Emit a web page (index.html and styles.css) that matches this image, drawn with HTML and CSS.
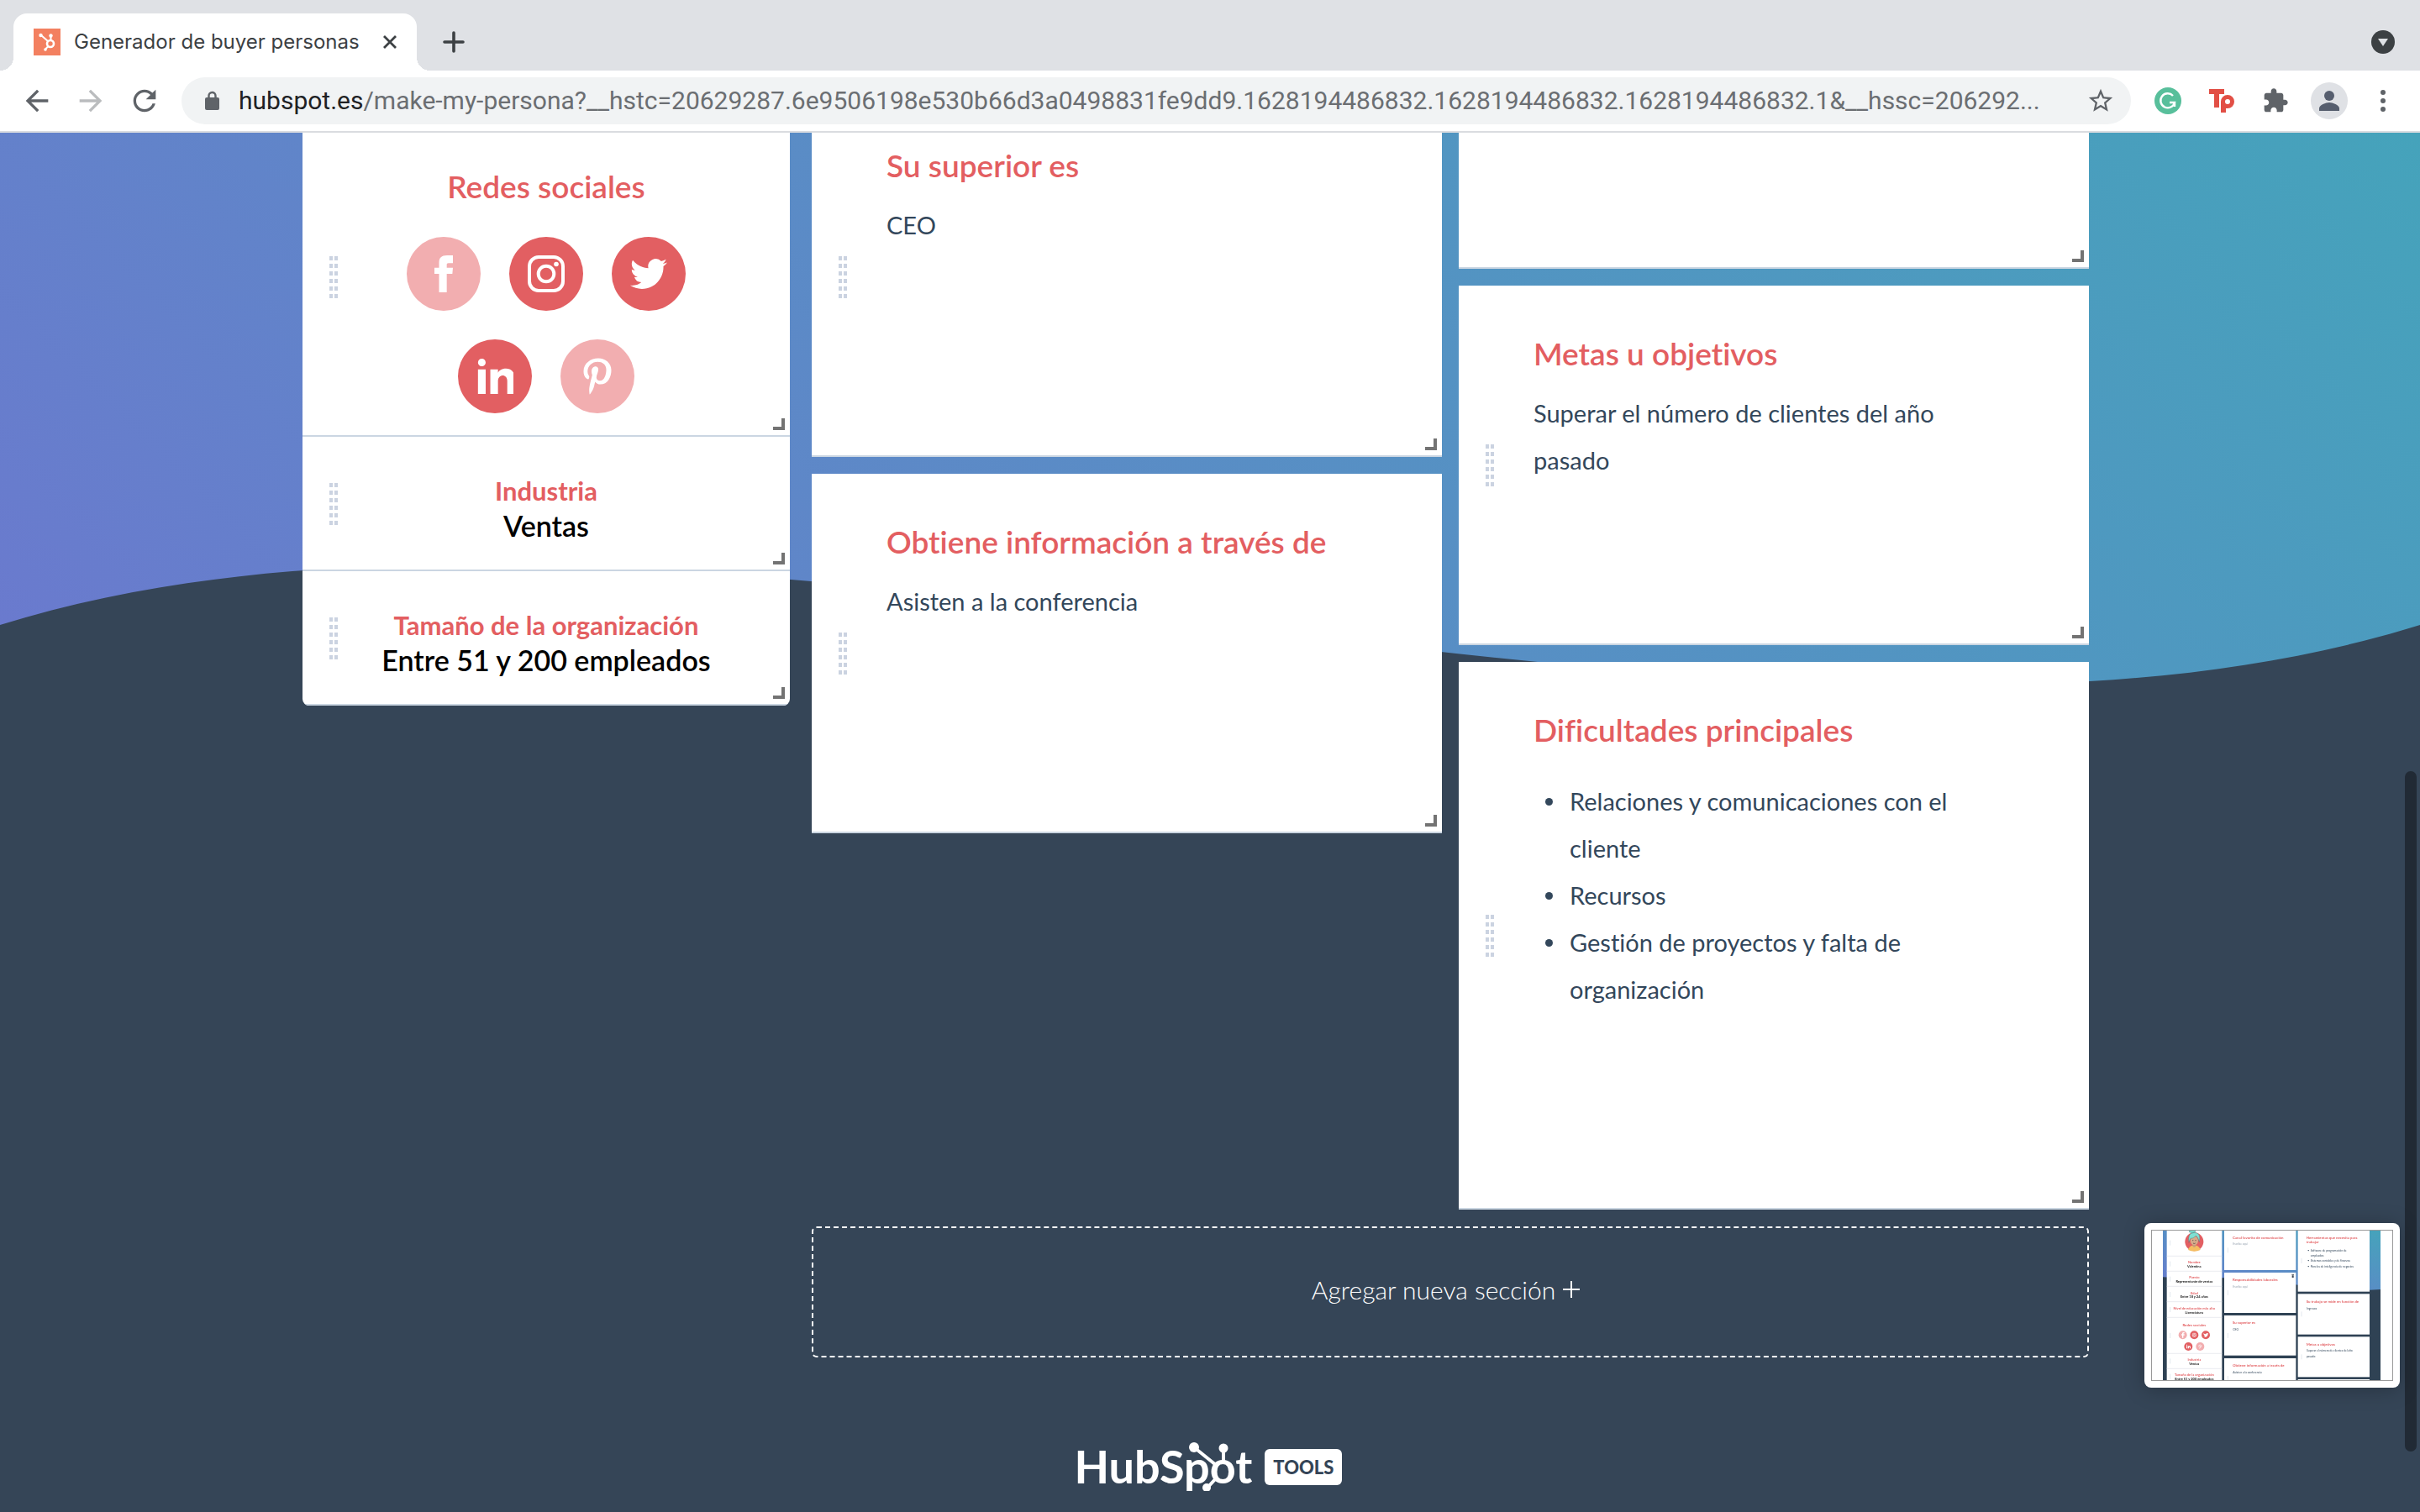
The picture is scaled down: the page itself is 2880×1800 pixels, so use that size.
FILE: index.html
```html
<!DOCTYPE html>
<html lang="es">
<head>
<meta charset="utf-8">
<meta name="viewport" content="width=device-width, initial-scale=1">
<title>Generador de buyer personas</title>
<link rel="stylesheet" href="styles.css">
</head>
<body>
<header class="browser">
  <div class="tabstrip">
    <div class="tab">
      <svg class="favicon" viewBox="0 0 32 32" aria-hidden="true"><rect width="32" height="32" fill="#f38060"/><g stroke="#fff" stroke-width="2" fill="none"><circle cx="20" cy="18" r="4" stroke-width="2.6"/><path d="M9 8l8 7M20.500 14V9M17.500 21l-4 4"/></g><g fill="#fff"><circle cx="8.500" cy="8" r="2.200"/><circle cx="20.500" cy="8.500" r="2.200"/><circle cx="14" cy="25" r="1.800"/></g></svg>
      <span class="tab-title">Generador de buyer personas</span>
      <button class="icon-btn tab-close" aria-label="Cerrar pestaña"><svg width="16" height="16" viewBox="0 0 16 16"><path d="M1 1l14 14M15 1L1 15" stroke="#3c4043" stroke-width="2.800"/></svg></button>
    </div>
    <button class="icon-btn new-tab" aria-label="Nueva pestaña"><svg width="26" height="26" viewBox="0 0 26 26"><path d="M13 2v22M2 13h22" stroke="#3c4043" stroke-width="3.600" stroke-linecap="round"/></svg></button>
    <button class="icon-btn tab-search" aria-label="Buscar pestañas"><svg width="28" height="28" viewBox="0 0 28 28"><circle cx="14" cy="14" r="14" fill="#3c4043"/><path d="M8 10h12l-6 9z" fill="#dfe1e5"/></svg></button>
  </div>
  <div class="toolbar">
    <button class="icon-btn" aria-label="Atrás"><svg width="40" height="40" viewBox="0 0 24 24"><path fill="#5f6368" d="M20 11H7.83l5.590-5.590L12 4l-8 8 8 8 1.410-1.410L7.830 13H20v-2z"/></svg></button>
    <button class="icon-btn" aria-label="Adelante"><svg width="40" height="40" viewBox="0 0 24 24"><path fill="#babcbe" d="M4 11h12.170l-5.590-5.590L12 4l8 8-8 8-1.410-1.410L16.170 13H4z"/></svg></button>
    <button class="icon-btn" aria-label="Recargar"><svg width="40" height="40" viewBox="0 0 24 24"><path fill="#5f6368" d="M17.650 6.350C16.200 4.900 14.210 4 12 4c-4.420 0-7.990 3.580-7.990 8s3.570 8 7.990 8c3.730 0 6.840-2.550 7.730-6h-2.080c-.82 2.330-3.040 4-5.650 4-3.310 0-6-2.690-6-6s2.690-6 6-6c1.660 0 3.140.69 4.220 1.780L13 11h7V4l-2.350 2.350z"/></svg></button>
    <div class="omnibox">
      <svg class="lock" width="32" height="28" viewBox="0 0 32 28" aria-hidden="true"><rect x="8" y="10" width="17" height="15" rx="2" fill="#5f6368"/><path d="M12.500 11V8a4 4 0 0 1 8 0v3" fill="none" stroke="#5f6368" stroke-width="2.400"/></svg>
      <div class="url" role="textbox" aria-label="Dirección"><span class="host">hubspot.es</span>/make-my-persona?__hstc=20629287.6e9506198e530b66d3a0498831fe9dd9.1628194486832.1628194486832.1628194486832.1&amp;__hssc=206292...</div>
      <button class="icon-btn star" aria-label="Añadir a favoritos"><svg width="34" height="34" viewBox="0 0 24 24"><path fill="#5f6368" d="M22 9.240l-7.190-.62L12 2 9.190 8.630 2 9.240l5.460 4.730L5.820 21 12 17.270 18.180 21l-1.630-7.030L22 9.240zM12 15.400l-3.760 2.270 1-4.280-3.320-2.880 4.380-.38L12 6.100l1.710 4.040 4.380.38-3.320 2.880 1 4.280L12 15.400z"/></svg></button>
    </div>
    <button class="icon-btn" aria-label="Grammarly"><svg width="32" height="32" viewBox="0 0 32 32"><circle cx="16" cy="16" r="16" fill="#58bf9b"/><path d="M22 10a8.500 8.500 0 1 0 2 8h-6M24 18v5" fill="none" stroke="#fff" stroke-width="2.400"/></svg></button>
    <button class="icon-btn" aria-label="Teleprompter"><svg width="32" height="32" viewBox="0 0 32 32" fill="#e24f45"><path d="M1 2h18v6h-6v16H7V8H1z"/><path fill-rule="evenodd" d="M15 30V17a8 8 0 1 1 8 8h-2v5zM23 14a3 3 0 1 0 0 6 3 3 0 0 0 0-6z"/></svg></button>
    <button class="icon-btn" aria-label="Extensiones"><svg width="32" height="32" viewBox="0 0 24 24"><path fill="#5f6368" d="M20.500 11H19V7c0-1.100-.9-2-2-2h-4V3.500C13 2.120 11.880 1 10.500 1S8 2.120 8 3.500V5H4c-1.100 0-1.990.9-1.990 2v3.800H3.500c1.490 0 2.700 1.210 2.700 2.700s-1.210 2.700-2.700 2.700H2V20c0 1.100.9 2 2 2h3.800v-1.500c0-1.490 1.210-2.700 2.700-2.700 1.490 0 2.700 1.210 2.700 2.700V22H17c1.100 0 2-.9 2-2v-4h1.500c1.380 0 2.500-1.120 2.500-2.500S21.880 11 20.500 11z"/></svg></button>
    <button class="icon-btn" aria-label="Perfil"><svg class="avatar" width="44" height="44" viewBox="0 0 44 44"><circle cx="22" cy="22" r="22" fill="#dfe1e5"/><g fill="#565e6e"><circle cx="22" cy="16" r="6"/><path d="M10 34v-3c0-4 8-7 12-7s12 3 12 7v3z"/></g></svg></button>
    <button class="icon-btn" aria-label="Menú"><svg width="8" height="28" viewBox="0 0 8 28" fill="#5f6368"><circle cx="4" cy="4" r="3"/><circle cx="4" cy="14" r="3"/><circle cx="4" cy="24" r="3"/></svg></button>
  </div>
</header>

<div class="page">
  <svg class="backdrop" viewBox="0 0 2880 700" preserveAspectRatio="none" aria-hidden="true">
    <defs><linearGradient id="sky" gradientUnits="userSpaceOnUse" x1="0" y1="586" x2="1733" y2="-1147"><stop offset="0" stop-color="#6a7ace"/><stop offset="1" stop-color="#45a3bb"/></linearGradient></defs>
    <path fill="url(#sky)" d="M0 0H2880V586C2080 836 800 336 0 586z"/>
  </svg>

  <main class="board">
    <aside class="profile">
      <section class="social">
        <span class="grip"></span>
        <h2 class="title">Redes sociales</h2>
        <div class="networks">
          <button class="network off" aria-label="Facebook"><svg width="44" height="44" viewBox="0 0 24 24"><path d="M9 8H6v4h3v12h5V12h3.642L18 8h-4V6.333C14 5.378 14.192 5 15.115 5H18V0h-3.808C10.596 0 9 1.583 9 4.615V8z"/></svg></button>
          <button class="network" aria-label="Instagram"><svg width="44" height="44" viewBox="0 0 44 44"><g fill="none" stroke="#fff" stroke-width="4"><rect x="2" y="2" width="40" height="40" rx="11"/><circle cx="22" cy="22" r="9.300"/></g><circle cx="34" cy="10.500" r="2.800"/></svg></button>
          <button class="network" aria-label="Twitter"><svg width="44" height="44" viewBox="0 0 24 24"><path d="M23.953 4.570a10 10 0 01-2.825.775 4.958 4.958 0 002.163-2.723c-.951.555-2.005.959-3.127 1.184a4.920 4.920 0 00-8.384 4.482C7.690 8.095 4.067 6.130 1.640 3.162a4.822 4.822 0 00-.666 2.475c0 1.710.87 3.213 2.188 4.096a4.904 4.904 0 01-2.228-.616v.06a4.923 4.923 0 003.946 4.827 4.996 4.996 0 01-2.212.085 4.936 4.936 0 004.604 3.417 9.867 9.867 0 01-6.102 2.105c-.39 0-.779-.023-1.170-.067a13.995 13.995 0 007.557 2.209c9.053 0 13.998-7.496 13.998-13.985 0-.21 0-.42-.015-.63A9.935 9.935 0 0024 4.590z"/></svg></button>
          <button class="network" aria-label="LinkedIn"><svg width="44" height="44" viewBox="-1 0.5 24 24"><path d="M4.980 3.500c0 1.381-1.110 2.500-2.480 2.500s-2.480-1.119-2.480-2.500c0-1.380 1.110-2.500 2.480-2.500s2.480 1.120 2.480 2.500zm.02 4.500h-5v16h5v-16zm7.982 0h-4.968v16h4.969v-8.399c0-4.670 6.029-5.052 6.029 0v8.399h4.988v-10.131c0-7.880-8.922-7.593-11.018-3.714v-2.155z"/></svg></button>
          <button class="network off" aria-label="Pinterest"><svg width="44" height="44" viewBox="-64 0 512 512"><path d="M204 6.500C101.400 6.500 0 74.900 0 185.600 0 256 39.600 296 63.600 296c9.900 0 15.600-27.600 15.600-35.400 0-9.300-23.700-29.100-23.700-67.800 0-80.400 61.200-137.400 140.400-137.400 68.100 0 118.500 38.700 118.500 109.800 0 53.100-21.300 152.700-90.300 152.700-24.900 0-46.200-18-46.200-43.800 0-37.800 26.400-74.400 26.400-113.400 0-66.200-93.900-54.200-93.900 25.800 0 16.800 2.100 35.400 9.600 50.700-13.800 59.400-42 147.900-42 209.100 0 18.900 2.700 37.500 4.500 56.400 3.400 3.800 1.700 3.400 6.900 1.500 50.400-69 48.600-82.500 71.400-172.800 12.300 23.400 44.100 36 69.300 36 106.200 0 153.900-103.500 153.900-196.800C384 71.300 298.200 6.500 204 6.500z"/></svg></button>
        </div>
        <span class="resize"></span>
      </section>
      <section class="fact">
        <span class="grip"></span>
        <h3 class="label">Industria</h3>
        <p class="value">Ventas</p>
        <span class="resize"></span>
      </section>
      <section class="fact">
        <span class="grip"></span>
        <h3 class="label">Tamaño de la organización</h3>
        <p class="value">Entre 51 y 200 empleados</p>
        <span class="resize"></span>
      </section>
    </aside>

    <div class="sections">
      <div class="column">
        <article class="card">
          <span class="grip"></span>
          <h2 class="title">Su superior es</h2>
          <p class="text">CEO</p>
          <span class="resize"></span>
        </article>
        <article class="card">
          <span class="grip"></span>
          <h2 class="title">Obtiene información a través de</h2>
          <p class="text">Asisten a la conferencia</p>
          <span class="resize"></span>
        </article>
      </div>
      <div class="column">
        <article class="card card-tail"><span class="resize"></span></article>
        <article class="card">
          <span class="grip"></span>
          <h2 class="title">Metas u objetivos</h2>
          <p class="text">Superar el número de clientes del año pasado</p>
          <span class="resize"></span>
        </article>
        <article class="card card-tall">
          <span class="grip"></span>
          <h2 class="title">Dificultades principales</h2>
          <ul class="text list">
            <li>Relaciones y comunicaciones con el cliente</li>
            <li>Recursos</li>
            <li>Gestión de proyectos y falta de organización</li>
          </ul>
          <span class="resize"></span>
        </article>
      </div>
      <button class="add">Agregar nueva sección <svg width="22" height="22" viewBox="0 0 22 22" aria-hidden="true"><path d="M11 1v20M1 11h20" stroke="#fff" stroke-width="2"/></svg></button>
    </div>
  </main>

  <footer class="footer">
    <a class="brand" href="#">
      <span class="wordmark">HubSpot<svg class="sprocket" width="50" height="60" viewBox="0 0 50 60" aria-hidden="true"><g stroke="#fff" stroke-width="4"><path d="M8 8L34 29M43 9v16M24 56l10-11"/></g><g fill="#fff"><circle cx="8" cy="8" r="6"/><circle cx="43" cy="9" r="5.500"/><circle cx="23" cy="56" r="5"/></g></svg></span>
      <span class="tools">TOOLS</span>
    </a>
  </footer>
</div>

<div class="scrollthumb"></div>

<a class="preview" href="#" aria-label="Vista previa">
  <svg class="preview-art" viewBox="93 105 858 534" preserveAspectRatio="xMidYMid slice">
    <defs>
      <linearGradient id="mini" x1="0" y1="1" x2="1" y2="0"><stop offset="0" stop-color="#6a7ace"/><stop offset="1" stop-color="#45a3bb"/></linearGradient>
      <g id="soc-off"><circle r="15" fill="#f2aeb0"/></g>
      <g id="soc-on"><circle r="15" fill="#e25f62"/></g>
    </defs>
    <rect x="93" y="105" width="858" height="534" fill="#fff"/>
    <rect x="132" y="105" width="777" height="534" fill="#2f4254"/>
    <path fill="url(#mini)" d="M132 105H909V315Q760 325 600 297T340 274T132 271z"/>
    <g fill="#fff">
      <rect x="146" y="105" width="197" height="534"/>
      <rect x="351" y="105" width="256" height="141"/><rect x="351" y="255" width="256" height="144"/><rect x="351" y="408" width="256" height="143"/><rect x="351" y="561" width="256" height="78"/>
      <rect x="614" y="105" width="256" height="218"/><rect x="614" y="331" width="256" height="145"/><rect x="614" y="484" width="256" height="144"/><rect x="614" y="636" width="256" height="3"/>
    </g>
    <path stroke="#dfe3ea" stroke-width="2" d="M146 196h197M146 250h197M146 304h197M146 359h197M146 415h197M146 544h197M146 598h197"/>
    <path stroke="#d5dce6" stroke-width="2" d="M158 140v18M158 215v18M158 269v18M158 324v18M158 378v18M158 471v18M158 562v18M158 617v18M364 166v18M364 318v18M364 471v18M364 624v15M627 204v18M627 394v18M627 547v18"/>
    <path fill="#333f4d" d="M592 262h8v2h-8zM593 265h6v8h-6z"/>
    <circle cx="244" cy="145" r="33" fill="#e25f62"/>
    <path d="M222 174q4-14 16-16h12q12 2 16 16q-22 10-44 0z" fill="#f5bd62"/>
    <rect x="238" y="150" width="12" height="14" rx="5" fill="#c99b78"/>
    <ellipse cx="244" cy="141" rx="14" ry="16" fill="#d6ab8a"/>
    <path d="M225 148q-6-36 20-36q24 1 17 34q-4-18-12-22q-10 10-19 9q-4 6-6 15zM226 110v-5h22v5q-11 7-22 0z" fill="#7fe0d2" stroke="#37666b" stroke-width="1"/>
    <path d="M237 140h4M247 140h4M240 150q4 3 8 0" stroke="#44383a" stroke-width="2" fill="none"/>
    <use href="#soc-off" x="203" y="478"/><use href="#soc-on" x="244" y="478"/><use href="#soc-on" x="285" y="478"/><use href="#soc-on" x="223" y="519"/><use href="#soc-off" x="265" y="519"/>
    <g fill="#fff">
      <path d="M201 488v-9h-3v-4h3v-3q0-5 8-4v4q-4-1-4 3h4v4h-4v9z"/>
      <path d="M276 484q5 0 6-2q-5-3-5-11q4 4 8 4q1-5 6-3l3-1-1 4q-2 14-17 9z"/>
      <path d="M216 517h3v9h-3zM216 512h3v3h-3zM221 517h3l5 0 2 3v6h-3v-5h-3v5h-4z"/>
    </g>
    <g fill="none" stroke="#fff" stroke-width="2"><rect x="238" y="472" width="12" height="12" rx="3"/><circle cx="244" cy="478" r="3"/><path d="M263 527l3-10M261 521q-3-8 4-8q7 1 4 7q-2 3-5 1"/></g>
    <g class="mini-label">
      <text x="244" y="222">Nombre</text><text x="244" y="277">Puesto</text><text x="244" y="332">Edad</text><text x="244" y="386">Nivel de educación más alto</text><text x="244" y="570">Industria</text><text x="244" y="625">Tamaño de la organización</text>
    </g>
    <g class="mini-value">
      <text x="244" y="237">Valentina</text><text x="244" y="291">Representante de ventas</text><text x="244" y="346">Entre 18 y 24 años</text><text x="244" y="401">Licenciatura</text><text x="244" y="584">Ventas</text><text x="244" y="639">Entre 51 y 200 empleados</text>
    </g>
    <text class="mini-title mini-center" x="244" y="447">Redes sociales</text>
    <g class="mini-title">
      <text x="381" y="134">Canal favorito de comunicación</text><text x="381" y="286">Responsabilidades laborales</text><text x="381" y="439">Su superior es</text><text x="381" y="592">Obtiene información a través de</text>
      <text x="644" y="134">Herramientas que necesita para</text><text x="644" y="151">trabajar</text><text x="644" y="363">Su trabajo se mide en función de</text><text x="644" y="515">Metas u objetivos</text>
    </g>
    <g class="mini-text mini-muted"><text x="382" y="157">Escribe aquí</text><text x="382" y="310">Escribe aquí</text></g>
    <g class="mini-text">
      <text x="382" y="462">CEO</text><text x="382" y="614">Asisten a la conferencia</text>
      <text x="649" y="179">•</text><text x="659" y="179">Software de programación de</text><text x="659" y="198">empleados</text><text x="649" y="217">•</text><text x="659" y="217">Sistemas contables y de finanzas</text><text x="649" y="236">•</text><text x="659" y="236">Paneles de inteligencia de negocios</text>
      <text x="645" y="386">Ingresos</text><text x="645" y="538">Superar el número de clientes del año</text><text x="645" y="557">pasado</text>
    </g>
  </svg>
</a>
</body>
</html>
```
FILE: styles.css
```css
* { box-sizing: border-box; }

body {
  margin: 0;
  min-height: 100vh;
  display: flex;
  flex-direction: column;
  background: #354557;
  color: #33475b;
  font-family: Lato, "Open Sans", sans-serif;
  font-variant-ligatures: none;
}

h2, h3, p, ul { margin: 0; padding: 0; }
button { font: inherit; border: 0; padding: 0; background: none; cursor: pointer; }
svg { display: block; }

/* Browser frame */
.browser {
  position: relative;
  z-index: 2;
  background: #fff;
  border-bottom: 2px solid #dadce0;
  font-family: Inter, Roboto, sans-serif;
}

.tabstrip {
  display: flex;
  align-items: flex-end;
  height: 84px;
  padding: 0 24px 0 16px;
  background: #dfe1e5;
}

.tab {
  position: relative;
  display: flex;
  align-items: center;
  width: 480px;
  height: 68px;
  padding: 0 24px;
  background: #fff;
  border-radius: 16px 16px 0 0;
}

.tab::before,
.tab::after {
  content: "";
  position: absolute;
  bottom: 0;
  width: 16px;
  height: 16px;
}

.tab::before { right: 100%; background: radial-gradient(circle at 0 0, transparent 16px, #fff 16px); }
.tab::after { left: 100%; background: radial-gradient(circle at 100% 0, transparent 16px, #fff 16px); }

.favicon { width: 32px; height: 32px; margin-right: 16px; }
.tab-title { flex: 1; font-size: 24px; line-height: 32px; color: #3c4043; white-space: nowrap; }

.icon-btn {
  display: flex;
  align-items: center;
  justify-content: center;
  flex: none;
  width: 40px;
  height: 44px;
}

.icon-btn svg { flex: none; }
.tab-close { width: 16px; }
.new-tab { height: 68px; margin-left: 24px; }
.tab-search { height: 68px; margin-left: auto; }

.toolbar {
  display: flex;
  align-items: center;
  gap: 24px;
  height: 72px;
  padding: 0 24px;
}

.omnibox {
  flex: 1;
  min-width: 0;
  display: flex;
  align-items: center;
  height: 56px;
  padding: 0 16px 0 20px;
  border-radius: 28px;
  background: #f1f3f4;
}

.lock { margin-right: 16px; flex: none; }
.url {
  flex: 1;
  min-width: 0;
  overflow: hidden;
  white-space: nowrap;
  font-family: Roboto, sans-serif;
  font-size: 30px;
  line-height: 40px;
  color: #6b6e72;
}
.host { color: #202124; }

/* Persona page */
.page {
  position: relative;
  flex: 1;
  display: flex;
  flex-direction: column;
  overflow: hidden;
}

.backdrop { position: absolute; top: 0; left: 0; width: 100%; height: 700px; }

.board {
  position: relative;
  display: grid;
  grid-template-columns: 580fr 1520fr;
  gap: 26px;
  align-items: start;
  max-width: 2126px;
  width: 82%;
  margin: -42px 0 0 12.5%;
}

.profile {
  padding-top: 24px;
  background: #fff;
  border-radius: 0 0 8px 8px;
  overflow: hidden;
  text-align: center;
}

.social,
.fact { position: relative; border-bottom: 2px solid #cbd6e2; }
.social { padding: 60px 80px 26px; }
.fact { padding: 44px 60px 30px; }

.title { font-size: 37px; line-height: 44px; font-weight: 600; color: #e35e61; }
.label { font-size: 31px; line-height: 40px; font-weight: 700; color: #e35e61; }
.value { font-size: 34px; line-height: 44px; font-weight: 600; color: #000; }

.networks {
  display: flex;
  flex-wrap: wrap;
  justify-content: center;
  gap: 34px;
  margin-top: 38px;
}

.network {
  display: flex;
  align-items: center;
  justify-content: center;
  width: 88px;
  height: 88px;
  border-radius: 50%;
  background: #e25f62;
}
.network.off { background: #f2aeb0; }
.network svg { fill: #fff; }

.sections {
  display: grid;
  grid-template-columns: 1fr 1fr;
  gap: 20px;
  align-items: start;
}

.column { display: flex; flex-direction: column; gap: 20px; }

.card {
  position: relative;
  min-height: 428px;
  padding: 59px 100px 58px 89px;
  background: #fff;
  border-bottom: 2px solid #cbd6e2;
}
.card-tail { min-height: 204px; }
.card-tall { min-height: 652px; }

.text {
  margin-top: 21px;
  font-size: 29px;
  line-height: 56px;
  font-weight: 400;
}

.list { margin-top: 35px; padding-left: 14px; list-style: none; }
.list li { display: flex; gap: 20px; }
.list li::before {
  content: "";
  flex: none;
  width: 9px;
  height: 9px;
  margin-top: 24px;
  border-radius: 50%;
  background: #33475b;
}

/* Drag handle: two columns of six dots */
.grip {
  position: absolute;
  top: 50%;
  left: 32px;
  width: 10px;
  height: 50px;
  margin-top: -24px;
  background:
    repeating-linear-gradient(to bottom, transparent 0 5px, #fff 5px 9px),
    linear-gradient(to right, #cbd3e1 0 4px, #fff 4px 6px, #cbd3e1 6px 10px);
}

.resize {
  position: absolute;
  right: 6px;
  bottom: 6px;
  width: 14px;
  height: 14px;
  border: solid #737373;
  border-width: 0 4px 4px 0;
}

.add {
  grid-column: 1 / -1;
  display: flex;
  align-items: center;
  justify-content: center;
  gap: 8px;
  height: 156px;
  padding: 0 10px 6px 0;
  border: 2px dashed #fff;
  border-radius: 6px;
  color: #fff;
  font-size: 30px;
  line-height: 40px;
  font-weight: 300;
}

.footer {
  position: relative;
  display: flex;
  justify-content: center;
  margin-top: 108px;
  padding: 0 4px 32px 0;
}

.brand { display: flex; align-items: center; gap: 15px; color: #fff; text-decoration: none; }
.wordmark { position: relative; font-size: 54px; line-height: 44px; font-weight: 700; }
.sprocket { position: absolute; top: -9px; right: 27px; }
.tools {
  padding: 0 10px;
  border-radius: 6px;
  background: #fff;
  color: #354557;
  font-size: 22px;
  line-height: 43px;
  font-weight: 900;
}

.scrollthumb {
  position: fixed;
  z-index: 3;
  top: 51%;
  right: 4px;
  width: 14px;
  height: 45%;
  border-radius: 7px;
  background: #212a35;
}

.preview {
  position: fixed;
  z-index: 3;
  right: 24px;
  bottom: 148px;
  width: 304px;
  height: 196px;
  padding: 8px;
  border-radius: 8px;
  background: #fff;
  box-shadow: 0 2px 24px rgba(0, 0, 0, 0.25);
}

.preview-art { width: 288px; height: 180px; border: 1px solid #9a9a9a; }
.mini-label, .mini-value, .mini-center { text-anchor: middle; }
.mini-label { font-size: 12px; font-weight: 700; fill: #e35e61; }
.mini-value { font-size: 12px; font-weight: 700; fill: #111; }
.mini-title { font-size: 13px; font-weight: 700; fill: #e35e61; }
.mini-text { font-size: 10px; fill: #33475b; }
.mini-muted { fill: #9aa5b2; }
```
